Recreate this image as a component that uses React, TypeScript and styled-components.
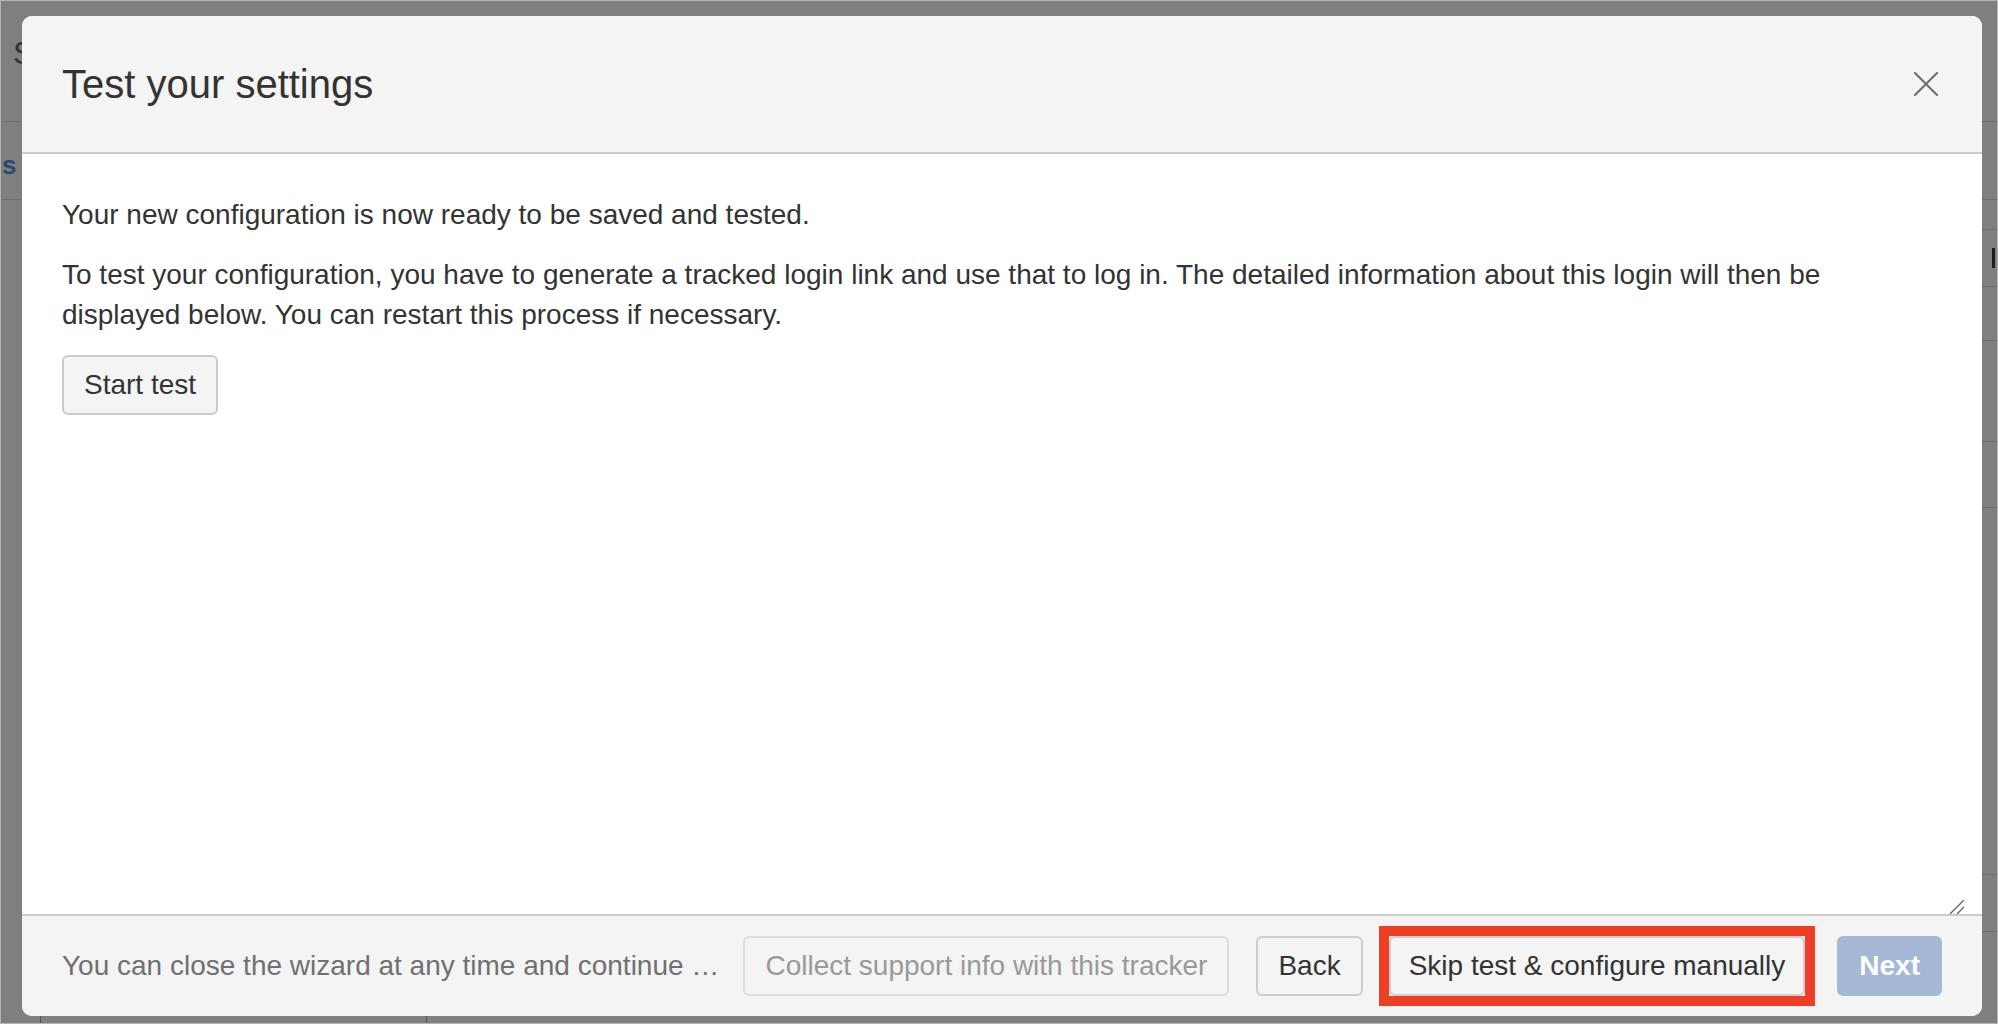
import React from "react";
import styled, { createGlobalStyle } from "styled-components";

const GlobalStyle = createGlobalStyle`
  html, body {
    margin: 0;
    padding: 0;
    background: #7f7f7f;
  }
  body {
    font-family: "Liberation Sans", Arial, Helvetica, sans-serif;
  }
  * { box-sizing: border-box; }
`;

const Screen = styled.div`
  position: relative;
  width: 1998px;
  height: 1024px;
  overflow: hidden;
  background: #7f7f7f;
  border: 1px solid #b4b4b4;
  display: flex;
  flex-direction: column;
`;

/* ---------- page behind the modal ---------- */

const PageHeader = styled.div`
  height: 121px;
  flex: none;
  border-bottom: 1px solid #6c6c6c;
  padding: 34px 0 0 12px;
  font-size: 32px;
  color: #333333;
`;

const PageNav = styled.div`
  height: 78px;
  flex: none;
  border-bottom: 1px solid #6c6c6c;
  padding: 28px 0 0 1px;
  font-size: 26px;
  font-weight: bold;
  color: #2b4a75;
`;

const PageContent = styled.div`
  flex: 1;
  display: flex;
  flex-direction: column;
`;

const RightTable = styled.div`
  margin-left: 1200px;
  display: flex;
  flex-direction: column;
`;

const TableRow = styled.div<{ $h: number }>`
  height: ${(p) => p.$h}px;
  border-bottom: 1px solid #6c6c6c;
  display: flex;
  justify-content: flex-end;
  align-items: center;
  padding-right: 2px;
`;

const Cursor = styled.span`
  width: 3px;
  height: 20px;
  background: #1e1e1e;
`;

const BottomRow = styled.div`
  margin-top: auto;
  height: 40px;
  display: grid;
  grid-template-columns: 40px 386px 1fr;
`;

const BottomCell = styled.div<{ $line?: boolean }>`
  border-right: ${(p) => (p.$line ? "1px solid #555" : "none")};
`;

/* ---------- modal ---------- */

const Dialog = styled.div`
  position: absolute;
  top: 15px;
  left: 21px;
  width: 1960px;
  height: 1000px;
  border-radius: 10px;
  overflow: hidden;
  background: #ffffff;
  display: flex;
  flex-direction: column;
`;

const Header = styled.div`
  height: 138px;
  flex: none;
  background: #f4f4f4;
  border-bottom: 2px solid #cccccc;
  padding: 0 44px 0 40px;
  display: flex;
  align-items: center;
  justify-content: space-between;
`;

const Title = styled.h2`
  margin: 0;
  font-size: 40px;
  font-weight: normal;
  color: #333333;
  line-height: 1.1;
`;

const CloseButton = styled.button`
  width: 24px;
  height: 24px;
  padding: 0;
  border: none;
  background: transparent;
  display: flex;
  cursor: pointer;
`;

const Body = styled.div`
  position: relative;
  flex: 1;
  padding: 41px 40px 0 40px;
  background: #ffffff;
  color: #333333;
  font-size: 28px;
  line-height: 40px;
`;

const Paragraph = styled.p`
  margin: 0 0 20px 0;
`;

const Grip = styled.svg`
  position: absolute;
  right: 18px;
  bottom: 0;
`;

const Footer = styled.div`
  height: 102px;
  flex: none;
  background: #f4f4f4;
  border-top: 2px solid #cccccc;
  padding: 0 40px;
  display: flex;
  align-items: center;
`;

const FooterNote = styled.div`
  flex: 1;
  min-width: 0;
  white-space: nowrap;
  font-size: 28px;
  color: #707070;
`;

type Variant = "default" | "disabled" | "primaryDisabled";

const Button = styled.button<{ $variant?: Variant; $gap?: number }>`
  height: 60px;
  flex: none;
  margin-left: ${(p) => p.$gap ?? 0}px;
  padding: 0 20px;
  border-radius: 6px;
  font-family: "Liberation Sans", Arial, Helvetica, sans-serif;
  font-size: 28px;
  line-height: 1;
  cursor: pointer;
  border: 2px solid
    ${(p) =>
      p.$variant === "disabled"
        ? "#dddddd"
        : p.$variant === "primaryDisabled"
        ? "#a5b9d7"
        : "#cccccc"};
  background: ${(p) => (p.$variant === "primaryDisabled" ? "#a5b9d7" : "#f4f4f4")};
  color: ${(p) =>
    p.$variant === "disabled"
      ? "#999999"
      : p.$variant === "primaryDisabled"
      ? "#ffffff"
      : "#333333"};
  font-weight: ${(p) => (p.$variant === "primaryDisabled" ? "bold" : "normal")};
`;

/* red annotation frame drawn around a button */
const Highlight = styled.span<{ $gap: number }>`
  flex: none;
  display: flex;
  border: 10px solid #ee3f26;
  margin: -10px -10px -10px ${(p) => p.$gap - 10}px;
  & > button {
    padding: 0 18px;
  }
`;

export default function App() {
  return (
    <>
      <GlobalStyle />
      <Screen>
        <PageHeader>S</PageHeader>
        <PageNav>s</PageNav>
        <PageContent>
          <RightTable>
            <TableRow $h={30} />
            <TableRow $h={57}>
              <Cursor />
            </TableRow>
            <TableRow $h={54} />
            <TableRow $h={101} />
            <TableRow $h={66} />
            <TableRow $h={367} />
            <TableRow $h={57} />
          </RightTable>
          <BottomRow>
            <BottomCell $line />
            <BottomCell $line />
            <BottomCell />
          </BottomRow>
        </PageContent>

        <Dialog role="dialog" aria-label="Test your settings">
          <Header>
            <Title>Test your settings</Title>
            <CloseButton aria-label="Close">
              <svg width="24" height="24" viewBox="0 0 24 24">
                <path d="M1 1 L23 23 M23 1 L1 23" stroke="#707070" strokeWidth="2.2" strokeLinecap="round" />
              </svg>
            </CloseButton>
          </Header>
          <Body>
            <Paragraph>Your new configuration is now ready to be saved and tested.</Paragraph>
            <Paragraph>
              To test your configuration, you have to generate a tracked login link and use that to log in. The
              detailed information about this login will then be displayed below. You can restart this process if
              necessary.
            </Paragraph>
            <Button>Start test</Button>
            <Grip width="14" height="14" viewBox="0 0 14 14">
              <path d="M14 0 L0 14 M14 7 L7 14" stroke="#666" strokeWidth="1.4" />
            </Grip>
          </Body>
          <Footer>
            <FooterNote>You can close the wizard at any time and continue …</FooterNote>
            <Button $variant="disabled" $gap={25}>
              Collect support info with this tracker
            </Button>
            <Button $gap={27}>Back</Button>
            <Highlight $gap={26}>
              <Button>Skip test &amp; configure manually</Button>
            </Highlight>
            <Button $variant="primaryDisabled" $gap={32}>
              Next
            </Button>
          </Footer>
        </Dialog>
      </Screen>
    </>
  );
}
